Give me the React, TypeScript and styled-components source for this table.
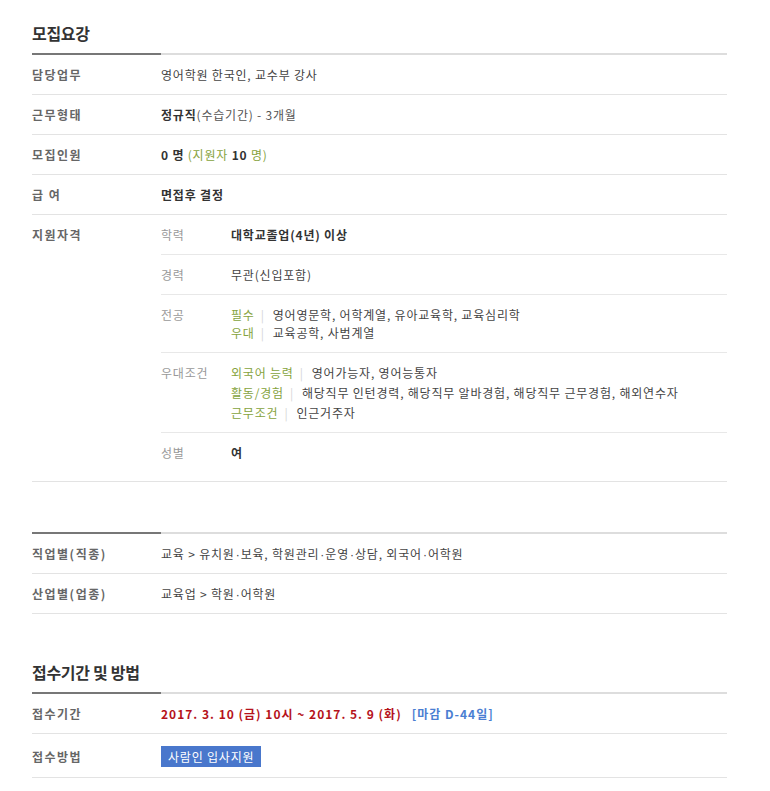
import React from 'react';
import styled, { createGlobalStyle } from 'styled-components';

const GlobalStyle = createGlobalStyle`
  body {
    margin: 0;
    background: #fff;
    font-family: "Noto Sans CJK KR", "Noto Sans", sans-serif;
    font-size: 12px;
    letter-spacing: 0.8px;
    color: #444;
  }
`;

// Layout

const Page = styled.div`
  width: 695px;
  padding: 21px 0 40px 32px;
`;

const Section = styled.section<{ $gap?: number }>`
  margin-top: ${(p) => p.$gap ?? 0}px;
`;

const Title = styled.h2`
  margin: 0 0 8px;
  font-size: 16px;
  line-height: 24px;
  font-weight: 700;
  color: #333;
  letter-spacing: -0.3px;
`;

const Bar = styled.div`
  height: 2px;
  background: linear-gradient(to right, #777 0 129px, #dddddd 129px);
`;

const Row = styled.div<{ $flush?: boolean; $tall?: boolean }>`
  display: grid;
  grid-template-columns: 129px 1fr;
  align-items: ${(p) => (p.$tall ? 'center' : 'start')};
  border-bottom: 1px solid #e3e3e3;
  padding: ${(p) => (p.$flush ? '0' : p.$tall ? '12px 0 10px' : '10px 0 9px')};
  line-height: 20px;
`;

const Label = styled.div<{ $top?: boolean }>`
  font-weight: 700;
  color: #666;
  letter-spacing: 1.5px;
  padding-top: ${(p) => (p.$top ? '10px' : '0')};
`;

const Value = styled.div`
  color: #444;
`;

const Strong = styled.b`
  font-weight: 700;
  color: #333;
`;

const Muted = styled.span`
  color: #555;
`;

const Green = styled.span`
  color: #86a33d;
`;

// narrow middle dot, as in the original bitmap font
const Dot = styled.span`
  font-family: "Liberation Sans", sans-serif;
  letter-spacing: 0;
  line-height: 0;
  padding: 0 1px;
`;

// 지원자격 sub table

const SubList = styled.div``;

const SubRow = styled.div<{ $tight?: boolean }>`
  display: grid;
  grid-template-columns: 70px 1fr;
  border-bottom: 1px solid #e8e8e8;
  padding: ${(p) => (p.$tight ? '11px 0 10px' : '10px 0 9px')};
  line-height: ${(p) => (p.$tight ? '18px' : '20px')};

  &:last-child {
    border-bottom: none;
    padding-bottom: 18px;
  }
`;

const SubLabel = styled.div`
  color: #999;
`;

const Line = styled.div``;

const Tag = styled.span`
  color: #86a33d;
`;

const Sep = styled.span`
  display: inline-block;
  margin: 0 8px 0 6px;
  color: #d6d6d6;
`;

const Period = styled.span`
  color: #b5121b;
  font-weight: 700;
  letter-spacing: 1px;
`;

const Deadline = styled.span`
  margin-left: 10px;
  color: #4a7ed2;
  font-weight: 700;
  letter-spacing: 1px;
`;

const ApplyButton = styled.button`
  display: inline-block;
  height: 21px;
  padding: 0 7px;
  border: none;
  background: #4977cc;
  color: #fff;
  font-family: inherit;
  font-size: 12px;
  letter-spacing: 0.8px;
  line-height: 21px;
  cursor: pointer;
`;

const majors = [
  { tag: '필수', text: '영어영문학, 어학계열, 유아교육학, 교육심리학' },
  { tag: '우대', text: '교육공학, 사범계열' },
];

const prefs = [
  { tag: '외국어 능력', text: '영어가능자, 영어능통자' },
  { tag: '활동/경험', text: '해당직무 인턴경력, 해당직무 알바경험, 해당직무 근무경험, 해외연수자' },
  { tag: '근무조건', text: '인근거주자' },
];

// joins words with a narrow middle dot
const dotted = (words: string[]) =>
  words.map((w, i) => (
    <React.Fragment key={w + i}>
      {i > 0 && <Dot>·</Dot>}
      {w}
    </React.Fragment>
  ));

function App() {
  return (
    <Page>
      <GlobalStyle />

      {/* 모집요강 */}
      <Section>
        <Title>모집요강</Title>
        <Bar />
        <Row>
          <Label>담당업무</Label>
          <Value>영어학원 한국인, 교수부 강사</Value>
        </Row>
        <Row>
          <Label>근무형태</Label>
          <Value>
            <Strong>정규직</Strong>
            <Muted>(수습기간) - 3개월</Muted>
          </Value>
        </Row>
        <Row>
          <Label>모집인원</Label>
          <Value>
            <Strong>0 명</Strong> <Green>(지원자 </Green>
            <Strong>10</Strong>
            <Green> 명)</Green>
          </Value>
        </Row>
        <Row>
          <Label>급 여</Label>
          <Value>
            <Strong>면접후 결정</Strong>
          </Value>
        </Row>
        <Row $flush>
          <Label $top>지원자격</Label>
          <SubList>
            <SubRow>
              <SubLabel>학력</SubLabel>
              <Strong>대학교졸업(4년) 이상</Strong>
            </SubRow>
            <SubRow>
              <SubLabel>경력</SubLabel>
              <Value>무관(신입포함)</Value>
            </SubRow>
            <SubRow $tight>
              <SubLabel>전공</SubLabel>
              <div>
                {majors.map((m) => (
                  <Line key={m.tag}>
                    <Tag>{m.tag}</Tag>
                    <Sep>|</Sep>
                    {m.text}
                  </Line>
                ))}
              </div>
            </SubRow>
            <SubRow>
              <SubLabel>우대조건</SubLabel>
              <div>
                {prefs.map((m) => (
                  <Line key={m.tag}>
                    <Tag>{m.tag}</Tag>
                    <Sep>|</Sep>
                    {m.text}
                  </Line>
                ))}
              </div>
            </SubRow>
            <SubRow>
              <SubLabel>성별</SubLabel>
              <Strong>여</Strong>
            </SubRow>
          </SubList>
        </Row>
      </Section>

      {/* 직종 / 업종 */}
      <Section $gap={50}>
        <Bar />
        <Row>
          <Label>직업별(직종)</Label>
          <Value>
            교육 &gt; {dotted(['유치원', '보육'])}, {dotted(['학원관리', '운영', '상담'])},{' '}
            {dotted(['외국어', '어학원'])}
          </Value>
        </Row>
        <Row>
          <Label>산업별(업종)</Label>
          <Value>교육업 &gt; {dotted(['학원', '어학원'])}</Value>
        </Row>
      </Section>

      {/* 접수기간 및 방법 */}
      <Section $gap={46}>
        <Title>접수기간 및 방법</Title>
        <Bar />
        <Row>
          <Label>접수기간</Label>
          <Value>
            <Period>2017. 3. 10 (금) 10시 ~ 2017. 5. 9 (화)</Period>
            <Deadline>[마감 D-44일]</Deadline>
          </Value>
        </Row>
        <Row $tall>
          <Label>접수방법</Label>
          <div>
            <ApplyButton>사람인 입사지원</ApplyButton>
          </div>
        </Row>
      </Section>
    </Page>
  );
}

export default App;
